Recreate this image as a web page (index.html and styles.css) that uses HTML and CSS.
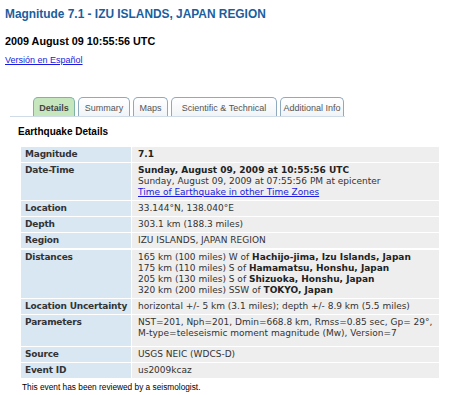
FILE: index.html
```html
<!DOCTYPE html>
<html>
<head>
<meta charset="utf-8">
<link rel="stylesheet" href="styles.css">
</head>
<body>
<h1 class="title">Magnitude 7.1 - IZU ISLANDS, JAPAN REGION</h1>
<h2 class="date">2009 August 09 10:55:56 UTC</h2>
<a class="lang" href="#">Versión en Español</a>

<div class="tabs">
  <span class="tab active t-details">Details</span>
  <span class="tab t-summary">Summary</span>
  <span class="tab t-maps">Maps</span>
  <span class="tab t-sci">Scientific &amp; Technical</span>
  <span class="tab t-add">Additional Info</span>
</div>

<h3 class="section">Earthquake Details</h3>

<table class="details">
  <tr><th>Magnitude</th><td><b>7.1</b></td></tr>
  <tr><th>Date-Time</th><td><b>Sunday, August 09, 2009 at 10:55:56 UTC</b><br>Sunday, August 09, 2009 at 07:55:56 PM at epicenter<br><a href="#">Time of Earthquake in other Time Zones</a></td></tr>
  <tr><th>Location</th><td>33.144°N, 138.040°E</td></tr>
  <tr><th>Depth</th><td>303.1 km (188.3 miles)</td></tr>
  <tr><th>Region</th><td>IZU ISLANDS, JAPAN REGION</td></tr>
  <tr class="gap-top"><th>Distances</th><td>165 km (100 miles) W of <b>Hachijo-jima, Izu Islands, Japan</b><br>175 km (110 miles) S of <b>Hamamatsu, Honshu, Japan</b><br>205 km (130 miles) S of <b>Shizuoka, Honshu, Japan</b><br>320 km (200 miles) SSW of <b>TOKYO, Japan</b></td></tr>
  <tr><th>Location Uncertainty</th><td>horizontal +/- 5 km (3.1 miles); depth +/- 8.9 km (5.5 miles)</td></tr>
  <tr class="params"><th>Parameters</th><td>NST=201, Nph=201, Dmin=668.8 km, Rmss=0.85 sec, Gp=&nbsp;29°,<br>M-type=teleseismic moment magnitude (Mw), Version=7</td></tr>
  <tr><th>Source</th><td>USGS NEIC (WDCS-D)</td></tr>
  <tr><th>Event ID</th><td>us2009kcaz</td></tr>
</table>

<p class="note">This event has been reviewed by a seismologist.</p>
</body>
</html>
```

FILE: styles.css
```css
body {
  margin: 0;
  padding: 5px 5px 0 5px;
  background: #ffffff;
  font-family: "Liberation Sans", Arial, sans-serif;
  color: #000;
}
.title {
  margin: 0;
  padding-top: 1px;
  font-size: 11.9px;
  line-height: 16px;
  font-weight: bold;
  color: #1a5e9e;
}
.date {
  margin: 13px 0 0 0;
  font-size: 10.8px;
  line-height: 13px;
  font-weight: bold;
}
.lang {
  display: inline-block;
  margin-top: 7px;
  font-size: 9px;
  line-height: 11px;
  color: #1a1ae0;
}
.tabs {
  display: flex;
  gap: 3px;
  width: 335px;
  margin: 30px 0 0 5px;
  padding-left: 23px;
  box-sizing: border-box;
  border-bottom: 1px solid #cfdbe6;
  height: 20px;
  align-items: flex-end;
}
.tab {
  box-sizing: border-box;
  height: 19px;
  padding: 4px 0 0 0;
  text-align: center;
  border: 1px solid #8fa9bd;
  border-bottom: none;
  border-radius: 5px 5px 0 0;
  background: linear-gradient(#ffffff, #f1f4f7);
  font-size: 9px;
  line-height: 12px;
  color: #555;
  white-space: nowrap;
}
.t-details { width: 42px; }
.t-summary { width: 52px; }
.t-maps { width: 35px; }
.t-sci { width: 106px; }
.t-add { width: 64px; }
.tab.active {
  background: #c6e6bd;
  border-color: #7fb3a6;
  font-weight: bold;
  color: #444;
}
.section {
  margin: 9px 0 0 13px;
  font-size: 10px;
  line-height: 12px;
  font-weight: bold;
}
.details {
  margin: 8px 0 0 15px;
  width: 420px;
  border-collapse: collapse;
  font-family: "DejaVu Sans", Verdana, sans-serif;
  font-size: 9px;
  line-height: 11px;
}
.details th, .details td {
  border: 1px solid #ffffff;
  padding: 2px 6px 2px 4px;
  vertical-align: top;
  text-align: left;
}
.details .gap-top th, .details .gap-top td {
  border-top-width: 2px;
}
.details .params th, .details .params td {
  padding-bottom: 7px;
}
.details th {
  width: 104px;
  padding-right: 2px;
  background: #d9e7f3;
  color: #333;
  font-weight: bold;
  white-space: nowrap;
  letter-spacing: -0.2px;
}
.details td {
  background: #eeeeee;
  color: #333;
  padding-left: 6px;
}
.details b { color: #222; }
.details a { color: #1a1ae0; }
.note {
  margin: 3px 0 0 17px;
  font-size: 8.3px;
  line-height: 11px;
}
```
